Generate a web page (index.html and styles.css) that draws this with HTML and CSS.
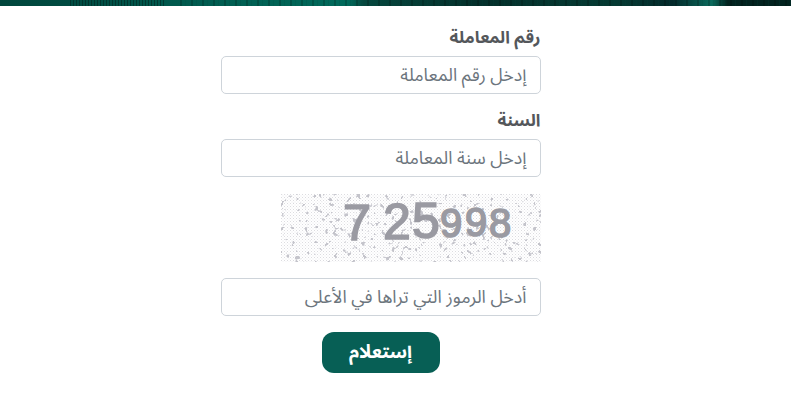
FILE: index.html
```html
<!DOCTYPE html>
<html lang="ar" dir="rtl">
<head>
<meta charset="utf-8">
<title>استعلام</title>
<link rel="stylesheet" href="styles.css">
</head>
<body>
<div class="banner"></div>
<main class="page">
<form class="form">
  <div class="field">
    <label class="label" for="a">رقم المعاملة</label>
    <input class="input" id="a" placeholder="إدخل رقم المعاملة">
  </div>
  <div class="field">
    <label class="label" for="b">السنة</label>
    <input class="input" id="b" placeholder="إدخل سنة المعاملة">
  </div>
  <svg class="captcha" viewBox="0 0 260 68" width="260" height="68" aria-label="725998">
    <defs>
      <pattern id="dots" width="3" height="3" patternUnits="userSpaceOnUse"><rect width="1" height="1" fill="#dcdce0"/><rect x="1.5" y="1.5" width="1" height="1" fill="#e6e6ea"/></pattern>
      <filter id="blobs" x="0" y="0" width="100%" height="100%">
        <feTurbulence type="fractalNoise" baseFrequency="0.21" numOctaves="2" seed="7"/>
        <feColorMatrix values="0 0 0 0 0.55  0 0 0 0 0.55  0 0 0 0 0.6  14 0 0 0 -8.9"/>
      </filter>
    </defs>
    <rect width="260" height="68" fill="url(#dots)"/>
    <rect width="260" height="68" filter="url(#blobs)"/>
    <text class="digits" y="46"><tspan class="big" x="62" y="46">7</tspan><tspan class="big" x="102" y="45">2</tspan><tspan class="big" x="131" y="44">5</tspan><tspan class="small" x="159" y="43">9</tspan><tspan class="small" x="184" y="42">9</tspan><tspan class="small" x="208" y="43">8</tspan></text>
  </svg>
  <input class="input" placeholder="أدخل الرموز التي تراها في الأعلى">
  <div class="actions"><button class="submit" type="button">إستعلام</button></div>
</form>
</main>
</body>
</html>
```
FILE: styles.css
```css
* { box-sizing: border-box; }
html, body { margin: 0; padding: 0; background: #fff; }
body { font-family: "Noto Sans Arabic", "Noto Sans", "DejaVu Sans", sans-serif; height: 407px; overflow: hidden; }
.banner {
  height: 6px;
  background:
    repeating-linear-gradient(90deg, rgba(0,30,25,.5) 0 1px, rgba(0,30,25,0) 1px 3px) 70px 0 / 95px 6px no-repeat,
    repeating-linear-gradient(90deg, rgba(0,0,0,.18) 0 2px, rgba(0,0,0,0) 2px 5px, rgba(0,70,60,.18) 5px 6px, rgba(0,0,0,0) 6px 11px) 180px 0 / 611px 6px no-repeat,
    linear-gradient(90deg, #00463c 0, #004d43 12%, #00594d 22%, #006a5b 44%, #05473e 46%, #04302b 60%, #053a33 78%, #03292a 85%, #0a6a5c 90%, #02231f 92%, #02231f 100%);
}
.page { display: flex; justify-content: center; padding-right: 30px; direction: ltr; }
.form { width: 320px; padding-top: 20px; display: flex; flex-direction: column; direction: rtl; }
.field { display: flex; flex-direction: column; margin-bottom: 15px; }
.label { font-size: 17px; font-weight: 700; line-height: 24px; color: #54575b; margin-bottom: 6px; }
.input {
  width: 320px; height: 38px; padding: 0 13px;
  border: 1px solid #ced4da; border-radius: 5px;
  font: 17.8px "Noto Sans Arabic", "Noto Sans", "DejaVu Sans", sans-serif;
  color: #495057; background: #fff; text-align: right; direction: rtl;
}
.input::placeholder { color: #6c757d; opacity: 1; }
.captcha { display: block; align-self: flex-start; margin-top: 2px; margin-bottom: 16px; direction: ltr; }
.digits { font-family: "Liberation Sans", sans-serif; font-weight: 400; fill: #9a9aa2; stroke: #9a9aa2; stroke-width: 1.6px; direction: ltr; }
.big { font-size: 50px; }
.small { font-size: 40px; }
.actions { display: flex; justify-content: center; margin-top: 16px; }
.submit {
  width: 118px; height: 41px; border: 0; border-radius: 12px;
  background: #075f55; color: #fff;
  font: 700 18.5px "Noto Sans Arabic", "Noto Sans", "DejaVu Sans", sans-serif;
}
```
